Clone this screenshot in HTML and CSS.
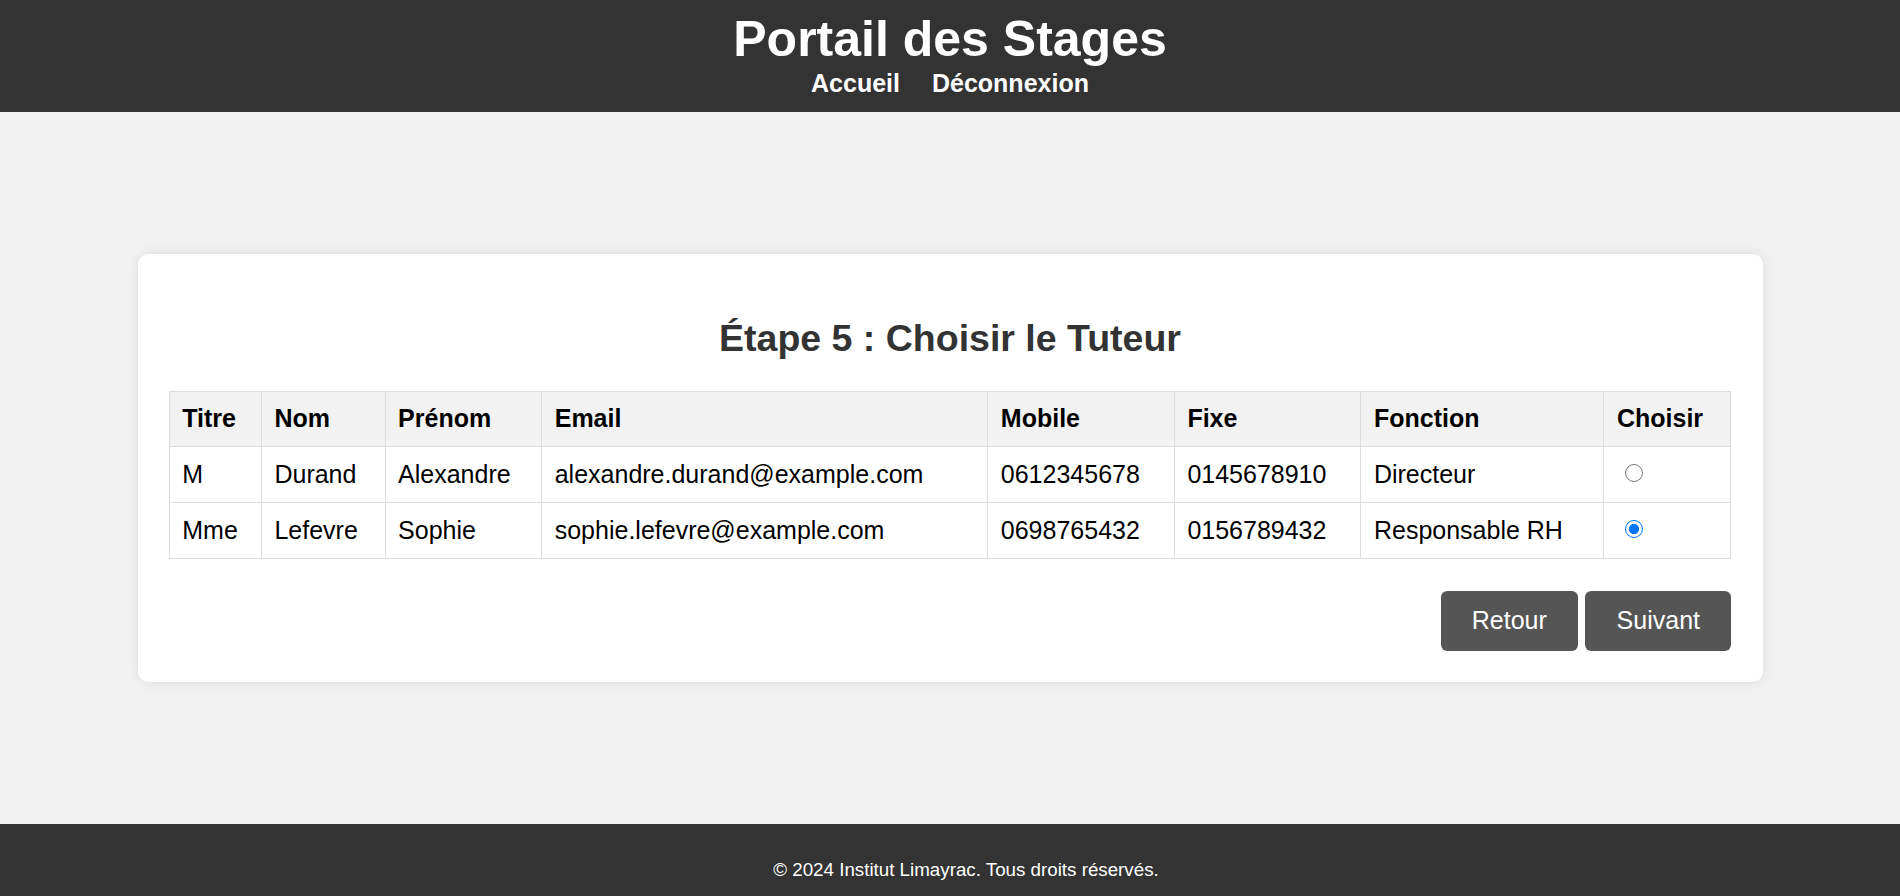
FILE: index.html
```html
<!DOCTYPE html>
<html lang="fr">
<head>
<meta charset="utf-8">
<title>Portail des Stages</title>
<link rel="stylesheet" href="styles.css">
</head>
<body>
<header class="site-header">
  <h1 class="site-title">Portail des Stages</h1>
  <nav class="site-nav">
    <a href="#">Accueil</a>
    <a href="#">Déconnexion</a>
  </nav>
</header>
<main class="main">
  <section class="card">
    <h2 class="card-title">Étape 5 : Choisir le Tuteur</h2>
    <table class="tutors">
      <thead>
        <tr>
          <th>Titre</th><th>Nom</th><th>Prénom</th><th>Email</th><th>Mobile</th><th>Fixe</th><th>Fonction</th><th>Choisir</th>
        </tr>
      </thead>
      <tbody>
        <tr>
          <td>M</td><td>Durand</td><td>Alexandre</td><td>alexandre.durand@example.com</td><td>0612345678</td><td>0145678910</td><td>Directeur</td><td><input class="radio" type="radio" name="tuteur"></td>
        </tr>
        <tr>
          <td>Mme</td><td>Lefevre</td><td>Sophie</td><td>sophie.lefevre@example.com</td><td>0698765432</td><td>0156789432</td><td>Responsable RH</td><td><input class="radio" type="radio" name="tuteur" checked></td>
        </tr>
      </tbody>
    </table>
    <div class="actions">
      <button class="btn" type="button">Retour</button>
      <button class="btn" type="button">Suivant</button>
    </div>
  </section>
</main>
<footer class="site-footer">
  <p class="copy">© 2024 Institut Limayrac. Tous droits réservés.</p>
</footer>
</body>
</html>
```
FILE: styles.css
```css
* { box-sizing: border-box; }
html, body { height: 100%; }
body {
  margin: 0;
  font-family: "Liberation Sans", Arial, sans-serif;
  font-size: 25px;
  background: #f2f2f2;
  color: #000;
  display: flex;
  flex-direction: column;
  overflow: hidden;
}
.site-header {
  background: #333;
  color: #fff;
  text-align: center;
  padding: 11px 0 15px;
  flex: none;
}
.site-title {
  margin: 0;
  font-size: 50px;
  font-weight: bold;
  line-height: 57.5px;
}
.site-nav {
  display: flex;
  justify-content: center;
  gap: 32px;
  line-height: 28.75px;
}
.site-nav a {
  color: #fff;
  text-decoration: none;
  font-weight: bold;
  font-size: 25px;
}
.main {
  flex: 1;
  display: flex;
  align-items: center;
  justify-content: center;
}
.card {
  width: 1625px;
  background: #fff;
  border-radius: 10px;
  box-shadow: 0 0 12px rgba(0, 0, 0, 0.1);
  padding: 31.25px;
}
.card-title {
  text-align: center;
  color: #333;
  font-size: 37.5px;
  margin: 31.1px 0;
  line-height: 43.1px;
}
.tutors {
  width: 100%;
  border-collapse: collapse;
}
.tutors th, .tutors td {
  border: 1px solid #ddd;
  padding: 12.5px;
  text-align: left;
  line-height: 28.75px;
  font-size: 25px;
}
.tutors th {
  background: #f2f2f2;
  font-weight: bold;
}
.tutors td { padding-top: 13.2px; padding-bottom: 13.2px; }
.radio {
  -webkit-appearance: none;
  appearance: none;
  display: inline-block;
  width: 18px;
  height: 18px;
  margin: 0 0 0 8.5px;
  border: 1.4px solid #767676;
  border-radius: 50%;
  background: #fff;
  vertical-align: 1px;
  cursor: pointer;
}
.radio:checked {
  border: 1.8px solid #0075ff;
  background: radial-gradient(circle, #0075ff 0 4.8px, #fff 5.3px);
}
.actions {
  display: flex;
  justify-content: flex-end;
  gap: 7.3px;
  margin-top: 32px;
}
.btn {
  background: #555;
  color: #fff;
  border: none;
  border-radius: 6.25px;
  font-family: "Liberation Sans", Arial, sans-serif;
  font-size: 25px;
  line-height: 28.75px;
  padding: 15.6px 31.25px;
  cursor: pointer;
}
.site-footer {
  flex: none;
  height: 72px;
  background: #333;
  color: #fff;
  text-align: center;
  padding: 35px 0 0 32px;
}
.copy {
  margin: 0;
  font-size: 18.75px;
  line-height: 21.5px;
}
```
